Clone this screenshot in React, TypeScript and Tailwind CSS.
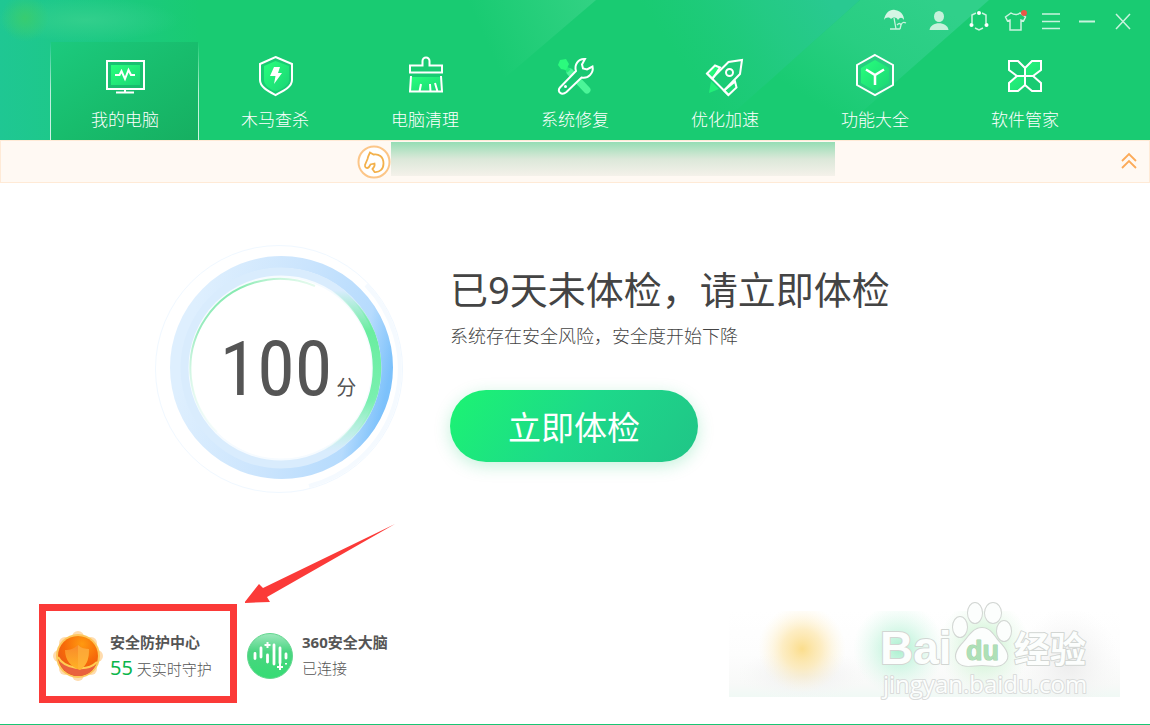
import { type ReactNode } from 'react';

interface Tab {
  label: string;
  icon: ReactNode;
}

interface WindowButton extends Tab {
  className?: string;
}

const iconFill = 'url(#iconFill)';

const tabs: Tab[] = [
  {
    label: '我的电脑',
    icon: (
      <>
        <rect x="10" y="13" width="29" height="20" fill={iconFill} stroke="none" />
        <rect x="6" y="9" width="37" height="28" />
        <path d="M24 37v3M15 40.500h18" />
        <path d="M14 23h4.500l2-4 3.500 8 3.500-9 2.500 5h4" />
      </>
    ),
  },
  {
    label: '木马查杀',
    icon: (
      <>
        <path d="M24.500 9 38 14v14c0 5-7 9-13.500 11.500C18 37 13 33 13 28V14z" fill={iconFill} stroke="none" />
        <path d="M24.500 5 41 12v16c0 7-9 11-16.500 15C17 39 9 35 9 28V12z" />
        <path d="M23 15h6l-2 6h4l-8 11 1.500-8H19z" fill="#fff" stroke="none" />
      </>
    ),
  },
  {
    label: '电脑清理',
    icon: (
      <>
        <path d="M10 25h30l1 15H9z" fill={iconFill} stroke="none" />
        <path d="M21.500 13.500V9a3.500 3.500 0 0 1 7 0v4.500H41v7H9v-7z" />
        <path d="M10 24 9 39.500h32L40 24M18.500 39.500 20 32M29.500 39.500 29 32M36.500 39.500 34 31" />
      </>
    ),
  },
  {
    label: '系统修复',
    icon: (
      <>
        <path d="m19 20 17 18" stroke="#4bf598" strokeWidth="7" strokeLinecap="round" />
        <path d="m12 13 6 6" stroke="#22ee78" strokeWidth="4" />
        <path d="m9 8 6-1 3 5-3 6-5-1-3-4z" fill="#2bfa7d" stroke="none" />
        <path
          d="M9 35.500 25 19c-2-6 2-12.500 9-12l-3 5.500 1 4 4 1 5.500-3c1.500 6-4 12.500-11 11L15.500 40c-5 4-10-.5-6.500-4.500z"
          fill="#19c873"
        />
        <circle cx="14.500" cy="34.500" r="1.500" fill="#fff" stroke="none" />
      </>
    ),
  },
  {
    label: '优化加速',
    icon: (
      <>
        <path d="m10 29-2 12 10-4z" fill="#22ee78" stroke="none" />
        <path d="m6 21.500 8-8 5 2-7.500 11.500zM27.500 43l8-7.500-1.500-6-11 9z" fill={iconFill} />
        <path d="m6 21.500 21.500 21.500M11.500 26 27.500 10 41 8l-2 14-16 16.500" />
        <circle cx="28.500" cy="20.500" r="3.500" />
      </>
    ),
  },
  {
    label: '功能大全',
    icon: (
      <>
        <path d="m24 8 14 8v15l-14 8-14-8V16z" fill={iconFill} stroke="none" />
        <path d="m24 3 18 10v20L24 43 6 33V13z" />
        <path d="m15 17.500 9 5.500 9-5.500M24 23v10" strokeWidth="2.500" />
      </>
    ),
  },
  {
    label: '软件管家',
    icon: (
      <>
        <path d="m31 9-7 7v8h8l8-6V9zM17 39l7-6v-9h-8l-8 7v8z" fill={iconFill} />
        <path d="m17 9 7 7v8h-8l-8-6V9zM31 39l-7-6v-9h8l8 7v8z" />
      </>
    ),
  },
];

const windowButtons: WindowButton[] = [
  {
    label: '度假模式',
    className: 'mr-2',
    icon: (
      <>
        <path d="M1 11C2 4 7 0 12 1c6 1 9 5 9 10-2-3-4-3-6 0-2-3-4-3-7-1-2-2-5-2-7 1z" fill="#d4f5e4" stroke="none" />
        <path d="m11 9 2 11M7 20h10M14 16c2-2 3-2 4 0 1-3 3-3 5-2M18 16l-1 4" strokeWidth="1.300" />
      </>
    ),
  },
  {
    label: '账户',
    className: 'mr-1',
    icon: (
      <>
        <ellipse cx="12" cy="7.500" rx="5" ry="5.500" fill="#c5f1db" stroke="none" />
        <path d="M2.500 21c1-9 18-9 19 0z" fill="#c5f1db" stroke="none" />
      </>
    ),
  },
  {
    label: '社区',
    icon: (
      <>
        <path d="m9 4-4 2v8M15 4l4 2v8M8 19l4 2 4-2" />
        <circle cx="12" cy="4" r="2" fill="#fff" stroke="none" />
        <circle cx="4.500" cy="16" r="2" fill="#fff" stroke="none" />
        <circle cx="19.500" cy="16" r="2" fill="#fff" stroke="none" />
      </>
    ),
  },
  {
    label: '换肤',
    icon: (
      <>
        <path d="M8 4 2.500 8l2 4L7 11v10h11V11l2.500 1 2-4L17 4c-2 2-6 2-9 0z" />
        <circle cx="21" cy="4" r="3" fill="#ea5747" stroke="none" />
      </>
    ),
  },
  { label: '菜单', icon: <path d="M3 5h18M3 12.500h18M3 19.500h18" /> },
  { label: '最小化', icon: <path d="M4 12.500h16" strokeWidth="2" /> },
  { label: '关闭', icon: <path d="m5 5 14 15M19 5 5 20" /> },
];

function HeaderBackdrop() {
  return (
    <svg className="absolute inset-0 h-full w-full" viewBox="0 0 1150 140" preserveAspectRatio="none" aria-hidden="true">
      <defs>
        <linearGradient id="leftTeal">
          <stop offset="0" stopColor="#1fc793" />
          <stop offset="1" stopColor="#1fc793" stopOpacity="0" />
        </linearGradient>
        <linearGradient id="beam" gradientUnits="userSpaceOnUse" x1="600" y1="0" x2="490" y2="50">
          <stop offset="0" stopColor="#33d284" />
          <stop offset="1" stopColor="#33d284" stopOpacity="0" />
        </linearGradient>
        <linearGradient id="bigBeam" gradientUnits="userSpaceOnUse" x1="830" y1="0" x2="700" y2="90">
          <stop offset="0" stopColor="#29c991" />
          <stop offset="0.400" stopColor="#26ca88" stopOpacity="0.800" />
          <stop offset="1" stopColor="#22ca80" stopOpacity="0" />
        </linearGradient>
        <linearGradient id="sideBeam" gradientUnits="userSpaceOnUse" x1="930" y1="0" x2="850" y2="125">
          <stop offset="0" stopColor="#30d08a" />
          <stop offset="0.500" stopColor="#2ccf86" stopOpacity="0.800" />
          <stop offset="1" stopColor="#2ccf86" stopOpacity="0" />
        </linearGradient>
        <radialGradient id="logoGlow">
          <stop offset="0" stopColor="#32cf8c" />
          <stop offset="1" stopColor="#32cf8c" stopOpacity="0" />
        </radialGradient>
        <radialGradient id="logoDot">
          <stop offset="0" stopColor="#38cc70" />
          <stop offset="1" stopColor="#38cc70" stopOpacity="0" />
        </radialGradient>
      </defs>
      <rect width="200" height="140" fill="url(#leftTeal)" />
      <ellipse cx="85" cy="20" rx="95" ry="22" fill="url(#logoGlow)" />
      <circle cx="25" cy="18" r="24" fill="url(#logoDot)" />
      <path d="M440 0h156l-96 82z" fill="url(#beam)" />
      <path d="M860 0h129L830 140H703z" fill="url(#sideBeam)" />
      <path d="M600 0h260L703 140H600z" fill="url(#bigBeam)" />
    </svg>
  );
}

function Header() {
  return (
    <header className="relative bg-[#19cb72] text-white">
      <HeaderBackdrop />
      <div className="relative flex h-[42px] items-center justify-end gap-3 pr-[15px]">
        {windowButtons.map((b) => (
          <button key={b.label} type="button" aria-label={b.label} className={`h-6 w-6 ${b.className ?? ''}`}>
            <svg viewBox="0 0 24 24" className="h-6 w-6" fill="none" stroke="#c9f3de" strokeWidth="1.500">
              {b.icon}
            </svg>
          </button>
        ))}
      </div>
      <nav className="relative flex px-[50px]">
        {tabs.map((tab, i) => (
          <button
            key={tab.label}
            type="button"
            aria-current={i === 0 ? 'page' : undefined}
            className="relative flex h-[98px] flex-1 flex-col items-center gap-[10px] pt-[10px]"
          >
            {i === 0 && (
              <span className="absolute inset-y-0 right-px left-0 bg-linear-to-b from-white/0 via-white/70 to-white/80">
                <span className="mx-px block h-full bg-linear-to-br from-[#1cca7e] via-[#18bd6d] to-[#16af61]" />
              </span>
            )}
            <svg viewBox="0 0 48 48" className="relative h-12 w-12" fill="none" stroke="#fff" strokeWidth="2">
              {tab.icon}
            </svg>
            <span className="relative text-[17px] leading-5 font-light">{tab.label}</span>
          </button>
        ))}
      </nav>
    </header>
  );
}

function NoticeBar() {
  return (
    <div className="flex h-[43px] items-center border border-[#ffead6] bg-[#fff9f3] px-2">
      <div className="flex-1" />
      <svg viewBox="0 0 34 34" className="ml-[42px] h-[34px] w-[34px]" fill="none" stroke="#f3b14c" strokeWidth="1.800">
        <circle cx="17" cy="17" r="15.500" fill="#fff" stroke="#fcc688" strokeWidth="2" />
        <path d="M13 7.500c-1 2-2 4-2.500 6.500L8 20c-.5 2.500 2 4 4 2l1.500-2.500 4-1c.5 2-.5 4-2 5.500l2 3c5 .5 9-2.500 9-8.500 0-7-5-10-10-9z" />
      </svg>
      <div className="mt-px h-[34px] w-[444px] self-start bg-linear-to-b from-[#94ddb4] via-[#dbe8d9] to-[#f5f1ea]" />
      <div className="flex flex-1 justify-end">
        <button type="button" aria-label="收起" className="h-6 w-6">
          <svg viewBox="0 0 24 24" className="h-6 w-6" fill="none" stroke="#fcaa58" strokeWidth="1.800">
            <path d="m5 11 7-7 7 7M5 18l7-7 7 7" />
          </svg>
        </button>
      </div>
    </div>
  );
}

function ScoreGauge() {
  return (
    <div className="grid h-[250px] w-[250px] shrink-0 place-items-center">
      <svg viewBox="0 0 250 250" className="h-full w-full [grid-area:1/1]" fill="none" aria-hidden="true">
        <defs>
          <linearGradient id="ringBlue" x1="0.050" y1="0.400" x2="1" y2="0.600">
            <stop offset="0" stopColor="#deeffe" />
            <stop offset="0.500" stopColor="#cae4fd" />
            <stop offset="0.850" stopColor="#b6dbfd" />
            <stop offset="1" stopColor="#7cc1fb" />
          </linearGradient>
          <linearGradient id="ringGreen" x1="0" y1="0" x2="0" y2="1">
            <stop offset="0.080" stopColor="#6aeda0" stopOpacity="0" />
            <stop offset="0.300" stopColor="#6aeda0" />
            <stop offset="0.680" stopColor="#7af0b0" />
            <stop offset="0.950" stopColor="#a0f3c9" stopOpacity="0" />
          </linearGradient>
          <linearGradient id="thinGreen" gradientUnits="userSpaceOnUse" x1="165" y1="30" x2="50" y2="190">
            <stop offset="0" stopColor="#86eab0" stopOpacity="0" />
            <stop offset="0.300" stopColor="#86eab0" />
            <stop offset="0.600" stopColor="#9cecc0" />
            <stop offset="1" stopColor="#c8f5da" stopOpacity="0" />
          </linearGradient>
        </defs>
        <circle cx="124" cy="125" r="123.500" stroke="#f0f8ff" />
        <path d="M211 41A121 121 0 0 1 154 242" stroke="#f5faff" strokeWidth="4" />
        <circle cx="126.500" cy="123.500" r="105.500" stroke="url(#ringBlue)" strokeWidth="12" />
        <circle cx="126" cy="124" r="96" stroke="#d9ecfd" strokeWidth="9" />
        <circle cx="126" cy="124" r="91.500" stroke="#f6fbff" strokeWidth="2" />
        <path d="M150 31.500A95.500 95.500 0 0 1 150 216.500" stroke="url(#ringGreen)" strokeWidth="8" />
        <path d="M185 44A99.500 99.500 0 0 1 185 204" stroke="url(#ringGreen)" strokeWidth="2" />
        <path d="M160 42A89.500 89.500 0 0 0 62 188" stroke="url(#thinGreen)" strokeWidth="2" />
      </svg>
      <p className="flex items-baseline gap-1 pl-4 text-[#555] [grid-area:1/1]">
        <span className="font-['Roboto_Condensed','Roboto',sans-serif] text-[76px] leading-[80px]">100</span>
        <span className="text-xl leading-5">分</span>
      </p>
    </div>
  );
}

function ShieldBadge() {
  return (
    <svg viewBox="0 0 52 52" className="h-[52px] w-[52px] shrink-0" fill="none" aria-hidden="true">
      <defs>
        <radialGradient id="orangeBall" cx="0.600" cy="0.200" r="0.900">
          <stop offset="0" stopColor="#ff9a10" />
          <stop offset="0.500" stopColor="#f76a09" />
          <stop offset="1" stopColor="#e2501e" />
        </radialGradient>
        <linearGradient id="shieldFace" x1="0" y1="0" x2="0" y2="1">
          <stop offset="0" stopColor="#f98a2c" />
          <stop offset="1" stopColor="#ffb324" />
        </linearGradient>
      </defs>
      <g fill="#ffdcae">
        <circle cx="26" cy="7" r="6" />
        <circle cx="39" cy="13" r="6" />
        <circle cx="45" cy="26" r="6" />
        <circle cx="39" cy="39" r="6" />
        <circle cx="26" cy="45" r="6" />
        <circle cx="13" cy="39" r="6" />
        <circle cx="7" cy="26" r="6" />
        <circle cx="13" cy="13" r="6" />
      </g>
      <circle cx="26" cy="26" r="22" fill="#fdc75c" />
      <circle cx="26" cy="26" r="20" fill="url(#orangeBall)" />
      <path d="M6 27c5 11 28 16 39 5-3 9-10 14-19 14S7 38 6 27z" fill="#e9623e" />
      <path d="M6 27c6 11 28 16 39 5" stroke="#ffcd52" strokeWidth="2" />
      <path d="M13 20c5 0 9-1 13-5 3 3 7 4 11 4 0 10-2 16-9 21-9-3-15-10-15-20z" fill="url(#shieldFace)" />
      <path d="M26 15c3 3 7 4 11 4 0 10-2 16-9 21l-2-1z" fill="#ffb540" opacity="0.600" />
    </svg>
  );
}

function BrainBadge() {
  return (
    <svg viewBox="0 0 48 48" className="h-12 w-12 shrink-0" fill="none" aria-hidden="true">
      <defs>
        <linearGradient id="greenBall" x1="0" y1="0" x2="0" y2="1">
          <stop offset="0" stopColor="#9de8bd" />
          <stop offset="0.400" stopColor="#4bd581" />
          <stop offset="1" stopColor="#35dc74" />
        </linearGradient>
      </defs>
      <circle cx="24" cy="24" r="22.500" fill="url(#greenBall)" stroke="#62d78e" />
      <path d="M9 21.500v5M15 16v9M21.500 23v7M28 13v19M34 16v15M40 22v4" stroke="#fff" strokeWidth="2.800" strokeLinecap="round" />
      <path d="M21.500 10v6M18.500 13h6M34 32v6M31 35h6M40 31v1.500" stroke="#fff" strokeWidth="2" />
    </svg>
  );
}

function Watermark() {
  return (
    <svg viewBox="0 0 391 106" className="h-[106px] w-[391px]" role="img" aria-label="Baidu 经验 jingyan.baidu.com">
      <defs>
        <radialGradient id="blobYellow">
          <stop offset="0" stopColor="#fbdd8c" />
          <stop offset="0.450" stopColor="#fde9b5" stopOpacity="0.800" />
          <stop offset="1" stopColor="#fff6df" stopOpacity="0" />
        </radialGradient>
        <radialGradient id="blobGreen">
          <stop offset="0" stopColor="#aaf0cf" />
          <stop offset="1" stopColor="#d6f8e8" stopOpacity="0" />
        </radialGradient>
        <radialGradient id="blobLime">
          <stop offset="0" stopColor="#bdefc4" />
          <stop offset="1" stopColor="#dcf7e0" stopOpacity="0" />
        </radialGradient>
        <radialGradient id="blobGray">
          <stop offset="0" stopColor="#ececec" />
          <stop offset="1" stopColor="#f6f6f6" stopOpacity="0" />
        </radialGradient>
        <linearGradient id="patchBase" x1="0" y1="0" x2="0" y2="1">
          <stop offset="0" stopColor="#fff" />
          <stop offset="0.500" stopColor="#fdfdfd" />
          <stop offset="0.850" stopColor="#f8f9f8" />
          <stop offset="1" stopColor="#f0f9f5" />
        </linearGradient>
        <clipPath id="patchClip">
          <rect y="16" width="391" height="86" />
        </clipPath>
      </defs>
      <g clipPath="url(#patchClip)">
        <rect y="16" width="391" height="86" fill="url(#patchBase)" />
        <ellipse cx="74" cy="80" rx="66" ry="26" fill="url(#blobGray)" />
        <ellipse cx="340" cy="68" rx="50" ry="56" fill="url(#blobGray)" />
        <circle cx="73" cy="54" r="44" fill="url(#blobYellow)" />
        <ellipse cx="170" cy="54" rx="46" ry="46" fill="url(#blobGreen)" />
        <ellipse cx="255" cy="52" rx="46" ry="48" fill="url(#blobLime)" />
      </g>
      <g fill="#fcfefd" stroke="#d2d6d3" strokeWidth="2" strokeLinejoin="round" className="[paint-order:stroke]">
        <text x="151" y="69" fontSize="46" fontWeight="700" fontFamily="Liberation Sans, sans-serif">
          Bai
        </text>
        <ellipse cx="231" cy="32" rx="7" ry="10" />
        <ellipse cx="246" cy="18" rx="7" ry="10" />
        <ellipse cx="264" cy="18" rx="8" ry="10" />
        <ellipse cx="275" cy="36" rx="7" ry="10" />
        <path d="M253 33c8 0 11 7 17 14 7 7 12 15 5 21-6 5-13 2-22 2s-17 3-23-2c-6-6-2-14 5-21 6-7 10-14 18-14z" />
        <text x="237" y="65" fontSize="27" fontWeight="700" fill="#aee0b6" stroke="#a3cfab" strokeWidth="1" fontFamily="Liberation Sans, sans-serif">
          du
        </text>
        <text x="285" y="68" fontSize="36" fontWeight="700" fontFamily="Noto Sans CJK SC, sans-serif">
          经验
        </text>
        <text x="154" y="98" fontSize="24" stroke="#dadcdb" fontFamily="Open Sans, sans-serif">
          jingyan.baidu.com
        </text>
      </g>
    </svg>
  );
}

export default function App() {
  return (
    <div className="flex min-h-screen w-full flex-col border-b border-[#19c573] bg-white font-['Noto_Sans','Noto_Sans_CJK_SC',sans-serif]">
      <Header />
      <NoticeBar />
      <main className="flex flex-1 flex-col justify-between">
        <section className="flex gap-[45px] pt-[61px] pl-[155px]">
          <ScoreGauge />
          <div className="pt-[21px]">
            <h1 className="text-[38px] leading-[48px] text-[#444]">已9天未体检，请立即体检</h1>
            <p className="mt-[11px] text-lg leading-6 font-light text-[#444]">系统存在安全风险，安全度开始下降</p>
            <button
              type="button"
              className="mt-[42px] h-[72px] w-[248px] rounded-full bg-linear-[125deg] from-[#1cf472] via-[#1dd98a] to-[#20c587] pt-1 text-[33px] text-white shadow-[0_4px_16px_#19cb7240]"
            >
              立即体检
            </button>
          </div>
        </section>
        <section className="flex items-end pr-[30px] pb-[21px] pl-[39px]">
          <div className="relative">
            <a href="#protect" className="flex h-[99px] w-[198px] items-center gap-[6px] border-[7px] border-[#fb3a38] pt-1 pl-[6px]">
              <ShieldBadge />
              <span className="flex flex-col text-[15px] leading-[26px] whitespace-nowrap text-[#555]">
                <strong>安全防护中心</strong>
                <span className="font-light">
                  <span className="text-xl leading-[26px] font-normal text-[#0bb54b]">55</span> 天实时守护
                </span>
              </span>
            </a>
            {/* pointer to the highlighted card */}
            <svg viewBox="0 0 152 80" className="absolute bottom-full left-full ml-2 h-20 w-[152px]" aria-hidden="true">
              <path d="M150 0 18 64l-4-4L-1 79l26-1-3-5z" fill="#fb3a38" />
            </svg>
          </div>
          <a href="#brain" className="ml-[9px] flex h-[99px] items-center gap-2 pt-1">
            <BrainBadge />
            <span className="flex flex-col pb-[2px] text-[15px] leading-[26px] whitespace-nowrap text-[#555]">
              <strong>360安全大脑</strong>
              <span className="font-light">已连接</span>
            </span>
          </a>
          <div className="mb-[2px] ml-auto">
            <Watermark />
          </div>
        </section>
      </main>
      <svg className="absolute h-0 w-0" aria-hidden="true">
        <defs>
          <linearGradient id="iconFill" x1="0" y1="0" x2="1" y2="1">
            <stop offset="0" stopColor="#27ff7c" />
            <stop offset="1" stopColor="#1bd575" />
          </linearGradient>
        </defs>
      </svg>
    </div>
  );
}
